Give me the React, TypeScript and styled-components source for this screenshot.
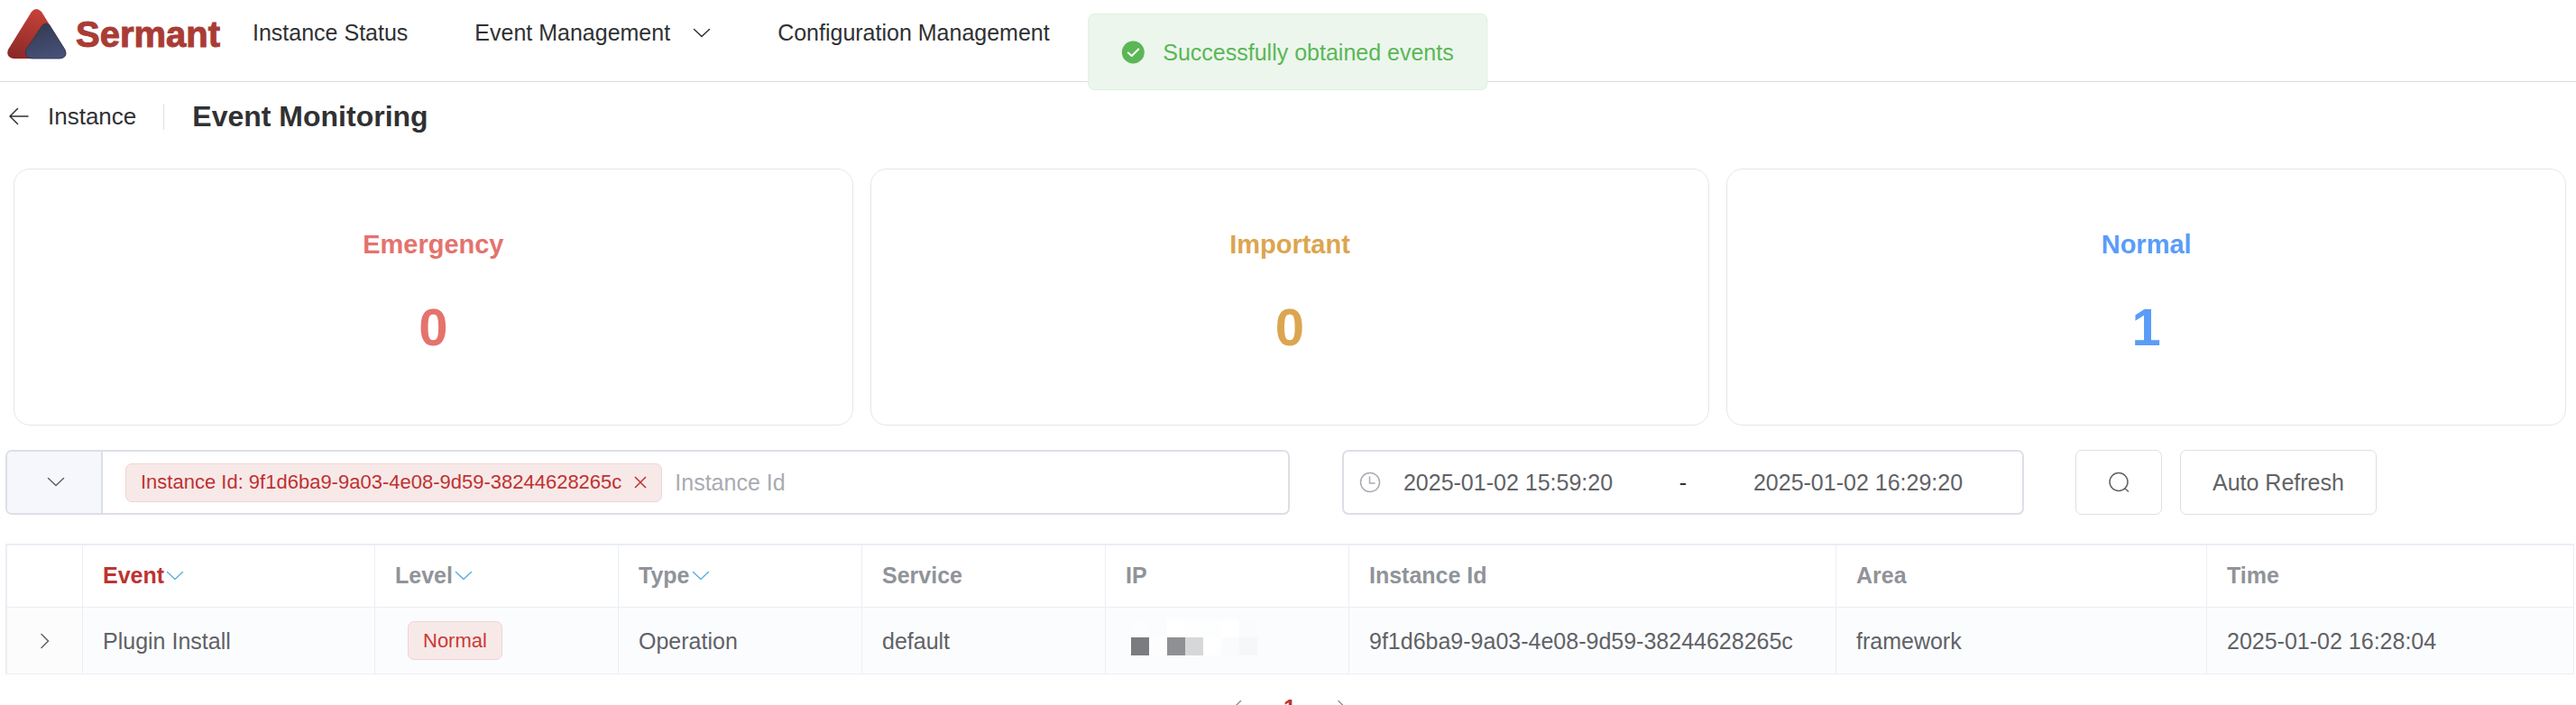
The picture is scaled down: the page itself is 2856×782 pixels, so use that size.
import React from "react";
import styled, { createGlobalStyle } from "styled-components";

const GlobalStyle = createGlobalStyle`
  *, *::before, *::after { box-sizing: border-box; }
  html, body, #root { height: 100%; }
  body {
    margin: 0;
    background: #fff;
    color: #303133;
    font-family: "Liberation Sans", Arial, Helvetica, sans-serif;
    font-size: 25px;
    line-height: 30px;
  }
  button, input { font: inherit; color: inherit; }
  button { cursor: pointer; }
`;

const Page = styled.div`
  height: 100%;
  overflow: hidden;
`;

const Header = styled.header`
  display: flex;
  align-items: flex-start;
  height: 91px;
  padding-left: 8px;
  border-bottom: 1px solid #dcdcdc;
`;

const Brand = styled.a`
  display: flex;
  align-items: flex-start;
  gap: 9px;
  width: 272px;
  padding-top: 10px;
  color: #a93c35;
  text-decoration: none;
`;

const BrandName = styled.span`
  font-size: 40px;
  font-weight: 700;
  line-height: 56px;
  -webkit-text-stroke: 1px #a93c35;
`;

const Nav = styled.nav`
  display: flex;
  gap: 74px;
  padding-top: 21px;
`;

const NavLink = styled.a`
  display: flex;
  align-items: center;
  gap: 25px;
  color: #303133;
  text-decoration: none;
`;

const Toast = styled.div`
  position: absolute;
  top: 15px;
  left: 50%;
  display: flex;
  align-items: center;
  gap: 20px;
  height: 85px;
  padding: 0 37px 0 36px;
  transform: translateX(-50%);
  border: 1px solid #dcf1de;
  border-radius: 7px;
  background: #ecf6ed;
  color: #5bb755;
  white-space: nowrap;
`;

const PageHeader = styled.div`
  display: flex;
  align-items: center;
  height: 96px;
  padding: 0 10px 20px;
`;

const BackButton = styled.button`
  display: flex;
  align-items: center;
  gap: 21px;
  padding: 0 30px 0 0;
  border: 0;
  background: none;
  font-size: 26px;
`;

const PageTitle = styled.h1`
  margin: 0;
  padding-left: 31px;
  border-left: 1px solid #dcdfe6;
  font-size: 32px;
  line-height: 29px;
`;

const Cards = styled.div`
  display: grid;
  grid-template-columns: repeat(3, 1fr);
  gap: 19px;
  padding: 0 11px 0 15px;
`;

const Card = styled.section<{ $color: string }>`
  display: flex;
  flex-direction: column;
  align-items: center;
  gap: 42px;
  height: 285px;
  padding-top: 66px;
  border: 1px solid #e6e6e6;
  border-radius: 18px;
  color: ${(p) => p.$color};
`;

const CardTitle = styled.h2`
  margin: 0;
  font-size: 29px;
  line-height: 34px;
`;

const CardCount = styled.strong`
  font-size: 58px;
  line-height: 66px;
`;

const Filters = styled.form`
  display: flex;
  padding: 27px 2px 32px 6px;
`;

const SearchBox = styled.div`
  display: flex;
  flex: 0 0 50%;
  height: 72px;
  border: 2px solid #dcdfe6;
  border-radius: 7px;
  overflow: hidden;
`;

const FieldPicker = styled.button`
  display: flex;
  align-items: center;
  justify-content: center;
  width: 106px;
  padding: 0 0 2px 4px;
  border: 0;
  border-right: 2px solid #dcdfe6;
  background: #f5f7fc;
  color: #5f6166;
`;

const SearchValues = styled.div`
  display: flex;
  flex: 1;
  align-items: center;
  gap: 14px;
  padding-left: 25px;
`;

const Tag = styled.span`
  display: inline-flex;
  align-items: center;
  gap: 14px;
  height: 43px;
  padding: 0 16px;
  border: 1px solid #f0d3d3;
  border-radius: 7px;
  background: #f8e9e9;
  color: #be3230;
  font-size: 22px;
  white-space: nowrap;
`;

const LevelTag = styled(Tag)`
  margin-left: 14px;
  color: #c93a34;
`;

const TagClose = styled.button`
  display: flex;
  padding: 0;
  border: 0;
  background: none;
`;

const SearchInput = styled.input`
  flex: 1;
  min-width: 0;
  padding: 0;
  border: 0;
  outline: 0;
  background: none;
  &::placeholder { color: #a8abb2; opacity: 1; }
`;

const DateRange = styled.div`
  display: flex;
  align-items: center;
  width: 756px;
  height: 72px;
  margin-left: 58px;
  padding-left: 17px;
  border: 2px solid #dcdfe6;
  border-radius: 7px;
  color: #a8abb2;
`;

const DateInput = styled.input`
  width: 282px;
  padding: 0;
  border: 0;
  outline: 0;
  background: none;
  color: #606266;
  text-align: center;
`;

const DateSeparator = styled.span`
  flex: 0 0 106px;
  color: #303133;
  text-align: center;
`;

const ActionButton = styled.button<{ $first?: boolean }>`
  display: flex;
  align-items: center;
  height: 72px;
  margin-left: ${(p) => (p.$first ? 57 : 20)}px;
  padding: 0 35px;
  border: 1px solid #dcdfe6;
  border-radius: 7px;
  background: #fff;
  color: #606266;
`;

const TableWrap = styled.div`
  margin: 0 2px 0 6px;
  border: solid #ebeef5;
  border-width: 2px 1px 0 2px;
`;

const Table = styled.table`
  width: 100%;
  table-layout: fixed;
  border-collapse: separate;
  border-spacing: 0;
`;

const HeadCell = styled.th<{ $active?: boolean }>`
  height: 69px;
  padding: 0 0 2px 22px;
  border-right: 1px solid #ebeef5;
  border-bottom: 1px solid #ebeef5;
  color: ${(p) => (p.$active ? "#bd3331" : "#909399")};
  text-align: left;
  &:last-child { border-right: 0; }
`;

const SortLabel = styled.span`
  display: inline-flex;
  align-items: center;
  gap: 2px;
`;

const Cell = styled.td`
  height: 74px;
  padding: 0 0 0 22px;
  border-right: 1px solid #ebeef5;
  border-bottom: 1px solid #ebeef5;
  background: #fbfcfe;
  color: #606266;
  white-space: nowrap;
  &:last-child { border-right: 0; }
`;

const ExpandCell = styled(Cell)`
  padding: 0;
  background: #fcfcfc;
`;

const ExpandButton = styled.button`
  display: flex;
  margin: 0 auto;
  padding: 0;
  border: 0;
  background: none;
`;

const Mosaic = styled.div`
  display: grid;
  grid-template-columns: repeat(7, 20px);
  grid-template-rows: 20px 20px;
  margin: 0 0 8px 6px;
`;

const MosaicBlock = styled.span<{ $shade: string }>`
  background: ${(p) => p.$shade};
`;

const Pagination = styled.nav`
  display: flex;
  align-items: center;
  justify-content: center;
  gap: 45px;
  padding: 22px 0 0 4px;
`;

const PageButton = styled.button<{ $current?: boolean }>`
  display: flex;
  padding: 0;
  border: 0;
  background: none;
  color: ${(p) => (p.$current ? "#bd3331" : "#909399")};
  font-weight: ${(p) => (p.$current ? 700 : 400)};
`;

const Logo = () => (
  <svg width="67" height="56" viewBox="0 0 67 56" aria-hidden="true">
    <defs>
      <linearGradient id="logoRed" x1="0.6" y1="0" x2="0.3" y2="1">
        <stop offset="0" stopColor="#c8423a" />
        <stop offset="1" stopColor="#8c2a28" />
      </linearGradient>
      <linearGradient id="logoBlue" x1="0.4" y1="0" x2="0.7" y2="1">
        <stop offset="0" stopColor="#343b50" />
        <stop offset="1" stopColor="#47517a" />
      </linearGradient>
    </defs>
    <path d="M27 3Q32-3 38 3L64 45Q68 53 58 55H7Q-2 53 1 45Z" fill="url(#logoRed)" />
    <path d="M39 18Q43 14 47 18L64 45Q68 54 58 55H27Q18 53 21 45Z" fill="url(#logoBlue)" stroke="#28304a" strokeWidth="0.7" />
  </svg>
);

const Chevron = ({ color = "currentColor" }: { color?: string }) => (
  <svg width="20" height="20" viewBox="0 0 20 20" fill="none" stroke={color} strokeWidth="1.5" strokeLinecap="round" aria-hidden="true">
    <path d="M1.500 6.500L10 14.500L18.500 6.500" />
  </svg>
);

const SideChevron = ({ left }: { left?: boolean }) => (
  <svg width="12" height="18" viewBox="0 0 12 18" fill="none" stroke="currentColor" strokeWidth="1.500" strokeLinecap="round" aria-hidden="true">
    <path d={left ? "M9.500 1.500L2 9L9.500 16.500" : "M2 1.500L9.500 9L2 16.500"} />
  </svg>
);

const summaries = [
  { title: "Emergency", count: 0, color: "#e4736d" },
  { title: "Important", count: 0, color: "#dca550" },
  { title: "Normal", count: 1, color: "#5a9cf8" },
];

const columns = [
  { title: "Event", width: 324, sortable: true, active: true },
  { title: "Level", width: 270, sortable: true },
  { title: "Type", width: 270, sortable: true },
  { title: "Service", width: 270 },
  { title: "IP", width: 270 },
  { title: "Instance Id", width: 540 },
  { title: "Area", width: 411 },
  { title: "Time", width: 406 },
];

const mosaic = [
  "#fcfdfe", "#fafcfe", "#fff", "#fefefe", "#fdfefe", "#fff", "#fafbfc",
  "#7b7c7f", "#fdfdfe", "#8f9093", "#d6d7d9", "#fff", "#fafbfd", "#f6f7f9",
];

export default function App() {
  return (
    <Page>
      <GlobalStyle />
      <Header>
        <Brand href="#" aria-label="Sermant">
          <Logo />
          <BrandName>Sermant</BrandName>
        </Brand>
        <Nav>
          <NavLink href="#">Instance Status</NavLink>
          <NavLink href="#">
            Event Management
            <Chevron />
          </NavLink>
          <NavLink href="#">Configuration Management</NavLink>
        </Nav>
      </Header>
      <Toast role="status">
        <svg width="26" height="26" viewBox="0 0 26 26" fill="none" aria-hidden="true">
          <circle cx="13" cy="13" r="12.500" fill="#5bb755" />
          <path d="M7.500 13.500L11.500 17L19 9.500" stroke="#fff" strokeWidth="2" strokeLinecap="round" strokeLinejoin="round" />
        </svg>
        Successfully obtained events
      </Toast>
      <main>
        <PageHeader>
          <BackButton type="button">
            <svg width="22" height="20" viewBox="0 0 22 20" fill="none" stroke="currentColor" strokeWidth="1.500" strokeLinecap="round" aria-hidden="true">
              <path d="M21 10H1.500M9.500 1.500L1 10L9.500 18.500" />
            </svg>
            Instance
          </BackButton>
          <PageTitle>Event Monitoring</PageTitle>
        </PageHeader>
        <Cards>
          {summaries.map((item) => (
            <Card key={item.title} $color={item.color}>
              <CardTitle>{item.title}</CardTitle>
              <CardCount>{item.count}</CardCount>
            </Card>
          ))}
        </Cards>
        <Filters onSubmit={(event) => event.preventDefault()}>
          <SearchBox>
            <FieldPicker type="button" aria-label="Choose filter field">
              <Chevron />
            </FieldPicker>
            <SearchValues>
              <Tag>
                Instance Id: 9f1d6ba9-9a03-4e08-9d59-38244628265c
                <TagClose type="button" aria-label="Remove filter">
                  <svg width="14" height="14" viewBox="0 0 14 14" stroke="currentColor" strokeWidth="1.500" aria-hidden="true">
                    <path d="M1 1L13 13M13 1L1 13" />
                  </svg>
                </TagClose>
              </Tag>
              <SearchInput aria-label="Instance Id" placeholder="Instance Id" />
            </SearchValues>
          </SearchBox>
          <DateRange>
            <svg width="24" height="24" viewBox="0 0 24 24" fill="none" stroke="currentColor" strokeWidth="1.500" strokeLinecap="round" aria-hidden="true">
              <circle cx="12" cy="12" r="10.500" />
              <path d="M11.500 6V13H17" />
            </svg>
            <DateInput aria-label="Start time" defaultValue="2025-01-02 15:59:20" />
            <DateSeparator>-</DateSeparator>
            <DateInput aria-label="End time" defaultValue="2025-01-02 16:29:20" />
          </DateRange>
          <ActionButton type="submit" $first aria-label="Search">
            <svg width="24" height="24" viewBox="0 0 24 24" fill="none" stroke="currentColor" strokeWidth="1.500" strokeLinecap="round" aria-hidden="true">
              <circle cx="12" cy="11.500" r="10" />
              <path d="M19 19L22.500 22" />
            </svg>
          </ActionButton>
          <ActionButton type="button">Auto Refresh</ActionButton>
        </Filters>
        <TableWrap>
          <Table>
            <colgroup>
              <col width={84} />
              {columns.map((column) => (
                <col key={column.title} width={column.width} />
              ))}
            </colgroup>
            <thead>
              <tr>
                <HeadCell aria-label="Details" />
                {columns.map((column) => (
                  <HeadCell key={column.title} $active={column.active} scope="col">
                    <SortLabel>
                      {column.title}
                      {column.sortable && <Chevron color="#5fb3de" />}
                    </SortLabel>
                  </HeadCell>
                ))}
              </tr>
            </thead>
            <tbody>
              <tr>
                <ExpandCell>
                  <ExpandButton type="button" aria-label="Expand row">
                    <SideChevron />
                  </ExpandButton>
                </ExpandCell>
                <Cell>Plugin Install</Cell>
                <Cell>
                  <LevelTag>Normal</LevelTag>
                </Cell>
                <Cell>Operation</Cell>
                <Cell>default</Cell>
                <Cell>
                  <Mosaic>
                    {mosaic.map((shade, index) => (
                      <MosaicBlock key={index} $shade={shade} />
                    ))}
                  </Mosaic>
                </Cell>
                <Cell>9f1d6ba9-9a03-4e08-9d59-38244628265c</Cell>
                <Cell>framework</Cell>
                <Cell>2025-01-02 16:28:04</Cell>
              </tr>
            </tbody>
          </Table>
        </TableWrap>
        <Pagination aria-label="Pages">
          <PageButton type="button" aria-label="Previous page">
            <SideChevron left />
          </PageButton>
          <PageButton type="button" $current>1</PageButton>
          <PageButton type="button" aria-label="Next page">
            <SideChevron />
          </PageButton>
        </Pagination>
      </main>
    </Page>
  );
}
